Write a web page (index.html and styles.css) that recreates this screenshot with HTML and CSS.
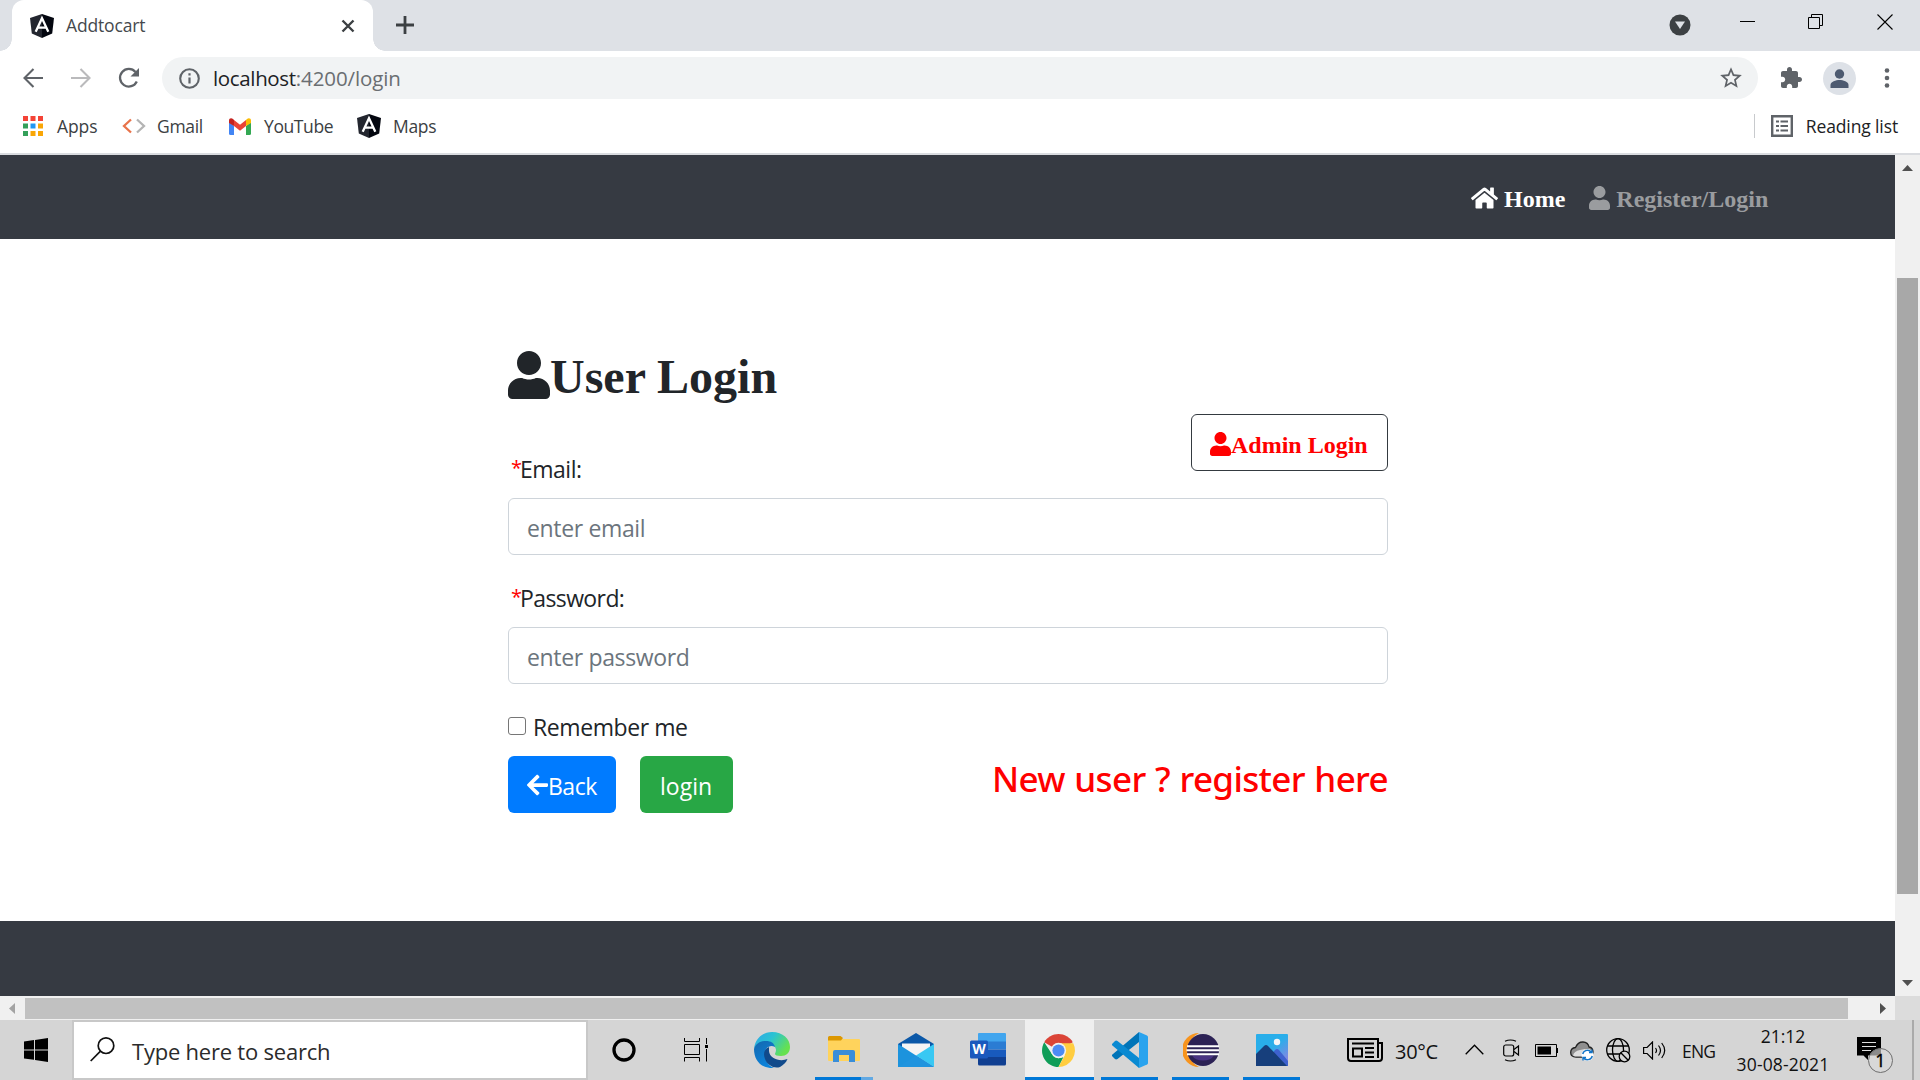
FILE: index.html
```html
<!DOCTYPE html>
<html lang="en">
<head>
<meta charset="utf-8">
<title>Addtocart</title>
<link rel="stylesheet" href="styles.css">
</head>
<body>
<svg class="defs" width="0" height="0" aria-hidden="true">
  <symbol id="user" viewBox="0 0 448 512"><path fill="currentColor" d="M224 256c70.7 0 128-57.3 128-128S294.7 0 224 0 96 57.3 96 128s57.3 128 128 128zm89.6 32h-16.7c-22.2 10.2-46.9 16-72.9 16s-50.6-5.8-72.9-16h-16.7C60.2 288 0 348.2 0 422.4V464c0 26.5 21.5 48 48 48h352c26.5 0 48-21.5 48-48v-41.6c0-74.2-60.2-134.4-134.4-134.4z"/></symbol>
  <symbol id="shield" viewBox="0 0 24 24">
    <path fill="#23262f" d="M12 0 0 4l1.8 15.6L12 24z"/><path fill="#03060f" d="M12 0l12 4-1.8 15.6L12 24z"/>
    <path fill="none" stroke="#fff" stroke-width="2.3" d="M5.7 17.8 12 4.2l6.3 13.6M8.3 13.6h7.4"/>
  </symbol>
</svg>

<header class="browser">
  <div class="tabstrip">
    <div class="tab">
      <svg class="favicon" width="24" height="24"><use href="#shield"/></svg>
      <span class="tab-title">Addtocart</span>
      <svg class="tab-close" width="14" height="14" viewBox="0 0 14 14"><path d="M1.5 1.5l11 11m0-11l-11 11" stroke="#3c4043" stroke-width="2.4"/></svg>
    </div>
    <svg class="new-tab" width="18" height="18" viewBox="0 0 18 18"><path d="M9 0v18M0 9h18" stroke="#3c4043" stroke-width="2.8"/></svg>
    <div class="window-controls">
      <svg width="22" height="22" viewBox="0 0 22 22"><circle cx="11" cy="11" r="10.5" fill="#3c4043"/><path d="M6 7.5h10L11 15z" fill="#dee1e6"/></svg>
      <svg class="minimize" width="15" height="16" viewBox="0 0 15 16"><path d="M0 8.5h15" stroke="#000"/></svg>
      <svg class="restore" width="15" height="16" viewBox="0 0 15 16"><path d="M.5 4.5h11v11H.5zM3.5 4V1.5h11v11H12" fill="none" stroke="#000"/></svg>
      <svg class="close" width="16" height="16" viewBox="0 0 16 16"><path d="M.5 .5l15 15m0-15l-15 15" stroke="#000" stroke-width="1.1"/></svg>
    </div>
  </div>

  <div class="toolbar">
    <svg width="20" height="20" viewBox="0 0 20 20"><path d="M20 10H2M10.5 1L1.5 10l9 9" fill="none" stroke="#5f6368" stroke-width="2.1"/></svg>
    <svg class="forward" width="20" height="20" viewBox="0 0 20 20"><path d="M0 10h18M9.5 1l9 9-9 9" fill="none" stroke="#bababc" stroke-width="2.1"/></svg>
    <svg class="reload" width="22" height="22" viewBox="0 0 22 22"><path d="M17.500 5A8.800 8.800 0 1 0 18.800 14.500" fill="none" stroke="#5f6368" stroke-width="2.3"/><path d="M21 1v8.500h-8.500z" fill="#5f6368"/></svg>
    <div class="omnibox">
      <svg width="21" height="21" viewBox="0 0 21 21"><circle cx="10.5" cy="10.5" r="9.3" fill="none" stroke="#5f6368" stroke-width="2.1"/><path d="M10.5 9.5v6M10.5 5.3v2.2" stroke="#5f6368" stroke-width="2.2"/></svg>
      <span class="url"><span class="host">localhost</span>:4200/login</span>
      <svg class="star" width="26" height="26" viewBox="0 0 24 24"><path fill="#5f6368" d="M22 9.24l-7.19-.62L12 2 9.19 8.63 2 9.24l5.46 4.73L5.82 21 12 17.27 18.18 21l-1.63-7.03L22 9.24zM12 15.4l-3.76 2.27 1-4.28-3.32-2.88 4.38-.38L12 6.1l1.71 4.04 4.38.38-3.32 2.88 1 4.28L12 15.4z"/></svg>
    </div>
    <svg class="extensions" width="24" height="24" viewBox="0 0 24 24"><path fill="#5f6368" d="M20.5 11H19V7c0-1.1-.9-2-2-2h-4V3.5C13 2.12 11.88 1 10.5 1S8 2.12 8 3.5V5H4c-1.1 0-1.99.9-1.99 2v3.8H3.5c1.49 0 2.7 1.21 2.7 2.7s-1.21 2.7-2.7 2.7H2V20c0 1.1.9 2 2 2h3.8v-1.5c0-1.49 1.21-2.7 2.7-2.7 1.49 0 2.7 1.21 2.7 2.7V22H17c1.1 0 2-.9 2-2v-4h1.5c1.38 0 2.5-1.12 2.5-2.5S21.88 11 20.5 11z"/></svg>
    <svg class="profile" width="33" height="33" viewBox="0 0 33 33"><circle cx="16.5" cy="16.5" r="16.5" fill="#dde1e7"/><circle cx="16.5" cy="12" r="4.7" fill="#4d5a70"/><path d="M7.5 26v-3c0-3.5 5.5-5 9-5s9 1.500 9 5v3z" fill="#4d5a70"/></svg>
    <svg class="kebab" width="6" height="20" viewBox="0 0 6 20" fill="#5f6368"><circle cx="3" cy="2.5" r="2.3"/><circle cx="3" cy="10" r="2.3"/><circle cx="3" cy="17.5" r="2.3"/></svg>
  </div>

  <nav class="bookmarks">
    <svg width="20" height="20" viewBox="0 0 20 20"><path d="M0 0h5v5H0zM7.5 0h5v5h-5zM15 0h5v5h-5z" fill="#f44336"/><path d="M0 7.5h5v5H0zM0 15h5v5H0z" fill="#34a05a"/><path d="M7.5 7.5h5v5h-5z" fill="#2196f3"/><path d="M15 7.5h5v5h-5zM7.5 15h5v5h-5zM15 15h5v5h-5z" fill="#f9a606"/></svg>
    <span class="bm-apps">Apps</span>
    <svg width="24" height="16" viewBox="0 0 24 16" fill="none" stroke-width="2.3"><path d="M9 1.500L2 8l7 6.500" stroke="#e8734a"/><path d="M15 1.500L22 8l-7 6.500" stroke="#b4b4b4"/></svg>
    <span class="bm-gmail">Gmail</span>
    <svg width="22" height="17" viewBox="0 0 22 17"><path d="M0 4l5 4v9H1.500Q0 17 0 15.500z" fill="#4285f4"/><path d="M17 8l5-4v11.500q0 1.500-1.500 1.500H17z" fill="#34a853"/><path d="M5 2l6 4.700L17 2v6l-6 4.700L5 8z" fill="#ea4335"/><path d="M0 5V2.500C0 0 2.500-.3 4 1l1 1v6z" fill="#c5221f"/><path d="M22 5V2.500C22 0 19.500-.3 18 1l-1 1v6z" fill="#fbbc04"/></svg>
    <span class="bm-youtube">YouTube</span>
    <svg width="24" height="24"><use href="#shield"/></svg>
    <span class="bm-maps">Maps</span>
    <div class="reading-list">
      <svg width="22" height="22" viewBox="0 0 22 22"><path d="M1.2 1.2h19.600v19.600H1.200z" fill="none" stroke="#5f6368" stroke-width="2.4"/><path d="M5 6.500h3M5 11h3M5 15.500h3M9.500 6.500H17M9.500 11H17M9.500 15.500H17" stroke="#5f6368" stroke-width="2"/></svg>
      <span>Reading list</span>
    </div>
  </nav>
</header>

<div class="viewport">
  <div class="page">
    <nav class="navbar">
      <a class="nav-link active"><svg width="27" height="24" viewBox="0 0 576 512"><path fill="currentColor" d="M280.37 148.26L96 300.11V464a16 16 0 0 0 16 16l112.06-.29a16 16 0 0 0 15.92-16V368a16 16 0 0 1 16-16h64a16 16 0 0 1 16 16v95.64a16 16 0 0 0 16 16.05L464 480a16 16 0 0 0 16-16V300L295.67 148.26a12.19 12.19 0 0 0-15.3 0zM571.6 251.47L488 182.56V44.05a12 12 0 0 0-12-12h-56a12 12 0 0 0-12 12v72.61L318.47 43a48 48 0 0 0-61 0L4.34 251.47a12 12 0 0 0-1.6 16.9l25.5 31A12 12 0 0 0 45.15 301l235.22-193.74a12.19 12.19 0 0 1 15.3 0L530.9 301a12 12 0 0 0 16.9-1.6l25.5-31a12 12 0 0 0-1.7-16.93z"/></svg><span>Home</span></a>
      <a class="nav-link"><svg width="21" height="24"><use href="#user"/></svg><span>Register/Login</span></a>
    </nav>
    <main class="login">
      <h1><svg width="42" height="48"><use href="#user"/></svg><span>User Login</span></h1>
      <div class="email-row">
        <label><span class="required">*</span>Email:</label>
        <button class="btn admin"><svg width="21" height="24"><use href="#user"/></svg><span>Admin Login</span></button>
      </div>
      <input class="field" type="text" placeholder="enter email">
      <label class="password-label"><span class="required">*</span>Password:</label>
      <input class="field" type="password" placeholder="enter password">
      <div class="remember"><span class="checkbox"></span><span>Remember me</span></div>
      <div class="actions">
        <button class="btn back"><svg width="21" height="24" viewBox="0 0 448 512"><path fill="currentColor" d="M257.5 445.1l-22.2 22.2c-9.4 9.4-24.6 9.4-33.9 0L7 273c-9.4-9.4-9.4-24.6 0-33.9L201.4 44.7c9.4-9.4 24.6-9.4 33.9 0l22.2 22.2c9.5 9.5 9.3 25-.4 34.3L136.6 216H424c13.3 0 24 10.7 24 24v32c0 13.3-10.7 24-24 24H136.6l120.5 114.8c9.8 9.3 10 24.8.4 34.3z"/></svg><span>Back</span></button>
        <button class="btn submit"><span>login</span></button>
        <a class="register">New user ? register here</a>
      </div>
    </main>
    <footer class="footer"></footer>
  </div>
  <div class="vscroll">
    <svg width="11" height="6" viewBox="0 0 11 6"><path d="M0 6L5.500 0 11 6z" fill="#505050"/></svg>
    <div class="vthumb"></div>
    <svg class="down" width="11" height="6" viewBox="0 0 11 6"><path d="M0 0l5.500 6L11 0z" fill="#505050"/></svg>
  </div>
  <div class="hscroll">
    <svg width="6" height="11" viewBox="0 0 6 11"><path d="M6 0L0 5.500 6 11z" fill="#a3a3a3"/></svg>
    <div class="hthumb"></div>
    <svg class="right" width="6" height="11" viewBox="0 0 6 11"><path d="M0 0l6 5.500L0 11z" fill="#505050"/></svg>
  </div>
  <div class="corner"></div>
</div>

<footer class="taskbar">
  <div class="start"><svg width="24" height="24" viewBox="0 0 24 24"><path d="M0 3.500l10-1.400v9.400H0zM11 2l13-2v11.500H11zM0 12.500h10v9.300L0 20.500zM11 12.500h13V24l-13-1.900z"/></svg></div>
  <div class="search">
    <svg width="25" height="25" viewBox="0 0 25 25" fill="none" stroke="#111" stroke-width="1.7"><circle cx="16" cy="8.700" r="7.800"/><path d="M10.500 14.200L.7 24"/></svg>
    <span>Type here to search</span>
  </div>
  <div class="apps">
    <div class="app"><svg width="24" height="24" viewBox="0 0 24 24"><circle cx="12" cy="12" r="10" fill="none" stroke="#000" stroke-width="3.300"/></svg></div>
    <div class="app"><svg width="24" height="24" viewBox="0 0 24 24"><path d="M.5 0v3.500h15V0M.5 6.500h15v10H.5zM.5 23.500V19.500h15v4M22.500 0v6M22.500 11v12.500" fill="none" stroke="#000"/><path d="M21 7h3v3h-3z"/></svg></div>
    <div class="app"><svg width="36" height="36" viewBox="0 0 36 36">
      <defs>
        <linearGradient id="edge-top" x1="0" y1="0" x2="1" y2=".5"><stop offset="0" stop-color="#2fa7e8"/><stop offset=".5" stop-color="#2bc3d2"/><stop offset="1" stop-color="#66e14f"/></linearGradient>
        <linearGradient id="edge-left" x1="0" y1="0" x2=".5" y2="1"><stop offset="0" stop-color="#1467ae"/><stop offset="1" stop-color="#0c84dc"/></linearGradient>
      </defs>
      <path d="M0 17C1 7 8 0 18 0c11 0 18 7 18 15 0 6-4 9-9 9-4 0-6-1-6-2 0-1 1-2 1-4 0-3-3-6-7-6C8 10 2 12 0 17z" fill="url(#edge-top)"/>
      <path d="M0 17c2-6 7-8 12-8 5 0 8 2 9 6-6-3-10 2-10 6 0 7 3 13 9 15C8 37 0 29 0 17z" fill="url(#edge-left)"/>
      <path d="M15 15c-5 2-6 7-4 12 2 6 9 10 15 8 3-2 6-4 7.500-8-7 3-18 0-18.500-8 0-2 0-3 0-4z" fill="#114a8b"/>
    </svg></div>
    <div class="app open stacked"><svg width="32" height="28" viewBox="0 0 32 28"><path d="M0 3h31q1 0 1 1v20q0 1-1 1H1q-1 0-1-1z" fill="#ffd35c"/><path d="M0 1.500Q0 0 1.500 0h11L15 2l-2 2.500H0z" fill="#dc9700"/><path d="M5 26V16q0-2 2-2h18q2 0 2 2v10h-6v-7H11v7z" fill="#3a8ed8"/></svg></div>
    <div class="app"><svg width="36" height="34" viewBox="0 0 36 34"><path d="M0 11L18 0l18 11v9H0z" fill="#0b58a8"/><path d="M4 10.500h28V18L18 28 4 18z" fill="#f4f4f4"/><path d="M0 11l36 23H0z" fill="#1c93dd"/><path d="M36 11L18 22.500 36 34z" fill="#39c8f3"/><path d="M18 22.500L36 34H0z" fill="#2094de"/></svg></div>
    <div class="app"><svg width="36" height="34" viewBox="0 0 36 34"><path d="M8 1q0-1 1-1h26q1 0 1 1v8H8z" fill="#41a5ee"/><path d="M8 8.500h28v8H8z" fill="#2b7cd3"/><path d="M8 16.500h28v7.500H8z" fill="#185abd"/><path d="M8 24h28v7q0 1.500-1.500 1.500h-25Q8 32.500 8 31z" fill="#103f91"/><rect y="7.500" width="18" height="18" rx="1.500" fill="#1b59bd"/><text x="9" y="21" text-anchor="middle" class="word-mark">W</text></svg></div>
    <div class="app open current"><svg width="33" height="33" viewBox="0 0 34 34"><path d="M17 17L2.300 8.500A17 17 0 0 1 31.700 8.500z" fill="#db4437"/><path d="M17 34A17 17 0 0 1 2.300 8.500L10.200 20.500 17 25l5-1z" fill="#0f9d58"/><path d="M17 9.500h15.200A17 17 0 0 1 17 34l6.500-12z" fill="#ffcd40"/><circle cx="17" cy="17" r="7.900" fill="#f1f1f1"/><circle cx="17" cy="17" r="6.300" fill="#4c8bf5"/></svg></div>
    <div class="app open"><svg width="36" height="36" viewBox="0 0 36 36"><path d="M0 24l3 3q1 .8 2.500 0L27 10V0L1 22q-1.500 1-1 2z" fill="#0074b8"/><path d="M0 12l3-3q1-.8 2.500 0L27 26v10L1 14q-1.500-1-1-2z" fill="#0a8ad2"/><path d="M27 0l8 3.500q1 .5 1 1.500v26q0 1-1 1.500L27 36z" fill="#2aa3ee"/></svg></div>
    <div class="app open"><svg width="36" height="34" viewBox="0 0 36 34"><path d="M16 0A17 17 0 0 0 16 34 19 19 0 0 1 16 0z" fill="#f7941e"/><circle cx="20" cy="17" r="16" fill="#2c2255"/><path d="M9 22.500h22q-3 5-11 5t-11-5z" fill="#483382"/><path d="M4 13.200h32M3.500 17.200h32.500M4 21.200h32" stroke="#fff" stroke-width="2"/></svg></div>
    <div class="app open"><svg width="32" height="32" viewBox="0 0 32 32"><defs><linearGradient id="sky" x1=".2" y1="0" x2="1" y2="1"><stop offset=".4" stop-color="#29aeea"/><stop offset="1" stop-color="#a07be0"/></linearGradient></defs><rect width="32" height="32" rx="1" fill="url(#sky)"/><path d="M12 25l7-9q2-2 4 0l9 11v5H15z" fill="#3e62cf"/><path d="M0 20l8-8q2-2 4 0l19 20H0z" fill="#173f7c"/><circle cx="21" cy="8" r="3.200" fill="#f4f6f8"/></svg></div>
  </div>
  <div class="tray">
    <svg width="36" height="24" viewBox="0 0 36 24" fill="none" stroke="#000" stroke-width="2"><path d="M31 20V1H1v19q0 3 3 3h28q3 0 3-3V5h-4"/><path d="M5 5.500h22M18 10h9M18 14.500h9M18 19h9M6 10.500h9V18.500H6z"/></svg>
    <span class="weather">30°C</span>
    <svg class="chevron" width="19" height="11" viewBox="0 0 19 11"><path d="M.7 10.200L9.500 1.200l8.800 9" fill="none" stroke="#000" stroke-width="1.300"/></svg>
    <svg class="meet" width="17" height="23" viewBox="0 0 17 23" fill="none" stroke="#000" stroke-width="1.200"><rect x=".7" y="6" width="10" height="11" rx="2"/><path d="M11 10.500l4.500-3.500v9L11 12.500M2 2.300Q7.500-.3 13 2.300M2 20.700q5.500 2.600 11 0"/></svg>
    <svg class="battery" width="23" height="13" viewBox="0 0 23 13"><path d="M.5 .5h21v12H.5zM22.500 4v5" fill="none" stroke="#000"/><path d="M2.500 2.500H16v8H2.500z"/></svg>
    <svg class="cloud" width="24" height="20" viewBox="0 0 24 20"><path d="M6 16Q.7 16 .7 11.500T5.500 6.500Q8 .8 13 1t6 5q4 .5 4 5t-5 5z" fill="#8f8f8f" stroke="#222" stroke-width="1.300"/><path d="M3 14.500Q4 10 10 9l5-1v7.500H5z" fill="#dedede"/><circle cx="17.500" cy="14" r="6" fill="#fff"/><path d="M12.700 13a5 5 0 0 1 9-1.500M22.300 15a5 5 0 0 1-9 1.500M22 8.500v3h-3M13 19.500v-3h3" fill="none" stroke="#1174c8" stroke-width="1.400"/></svg>
    <svg class="globe" width="25" height="25" viewBox="0 0 25 25" fill="none" stroke="#000" stroke-width="1.300"><circle cx="12" cy="12" r="11.300"/><ellipse cx="12" cy="12" rx="5.500" ry="11.300"/><path d="M1.500 8h21M1.500 16h13"/><circle cx="18.500" cy="18.500" r="5.300" fill="#d6d6d6"/><path d="M14.800 14.800l7.400 7.400"/></svg>
    <svg class="speaker" width="23" height="19" viewBox="0 0 23 19" fill="none" stroke="#000" stroke-width="1.200"><path d="M.6 6.500h3.500L9.500 1v17L4.100 12.500H.6z"/><path d="M12.500 7q2 2.500 0 5M15.500 4.500q4 5 0 10M18.700 2q6 7.500 0 15"/></svg>
    <span class="lang">ENG</span>
    <div class="clock"><span>21:12</span><span class="date">30-08-2021</span></div>
    <svg class="notifications" width="37" height="38" viewBox="0 0 37 38"><path d="M0 2h24v18.500H11v4.500L6.500 20.500H0z"/><path d="M5 7.500h14M5 11.500h14M5 15.500h9" stroke="#ddd" stroke-width="1.200"/><circle cx="23.500" cy="25.500" r="12" fill="#d8d8d8"/><path d="M12 22q2-8 11.500-8.500H24V20.500H13z" fill="#8b8b8b"/><circle cx="23.500" cy="25.500" r="12" fill="none" stroke="#6e6e6e"/><text x="23.500" y="32" text-anchor="middle" class="badge">1</text></svg>
    <div class="show-desktop"></div>
  </div>
</footer>
</body>
</html>
```
FILE: styles.css
```css
* { box-sizing: border-box; }
body { margin: 0; width: 1920px; height: 1080px; overflow: hidden; background: #fff; font-family: "Open Sans", "Noto Sans", sans-serif; color: #212529; display: flex; flex-direction: column; }
svg { display: block; flex: none; }
.defs { display: none; }
span, a { white-space: nowrap; }

.browser { height: 155px; border-bottom: 2px solid #dadce0; flex: none; }
.tabstrip { height: 51px; background: #dee1e6; display: flex; align-items: flex-start; padding-left: 12px; }
.tab { width: 361px; height: 51px; background: #fff; border-radius: 12px 12px 0 0; display: flex; align-items: center; padding: 0 18px; position: relative; }
.tab::before, .tab::after { content: ""; position: absolute; bottom: 0; width: 12px; height: 12px; }
.tab::before { left: -12px; background: radial-gradient(circle at 0 0, transparent 11.5px, #fff 12px); }
.tab::after { right: -12px; background: radial-gradient(circle at 100% 0, transparent 11.5px, #fff 12px); }
.tab-title { font-size: 17.5px; margin: -2px 0 0 12px; letter-spacing: -.15px; color: #45494d; }
.tab-close { margin-left: auto; }
.new-tab { margin: 16px 0 0 23px; }
.window-controls { display: flex; align-items: flex-start; margin: 14px 27px 0 auto; }
.window-controls .minimize { margin: -1px 0 0 49px; }
.window-controls .restore { margin: -1px 0 0 53px; }
.window-controls .close { margin-left: 54px; }

.toolbar { height: 54px; display: flex; align-items: center; padding: 0 30px 0 23px; }
.forward { margin-left: 28px; }
.reload { margin-left: 27px; }
.omnibox { margin-left: 22px; width: 1596px; height: 42px; border-radius: 21px; background: #f1f3f4; display: flex; align-items: center; padding: 0 14px 0 17px; }
.url { font-size: 20.5px; letter-spacing: -.1px; margin-left: 13px; color: #6a6e72; }
.host { color: #202124; letter-spacing: -.35px; }
.star { margin-left: auto; }
.extensions { margin-left: 21px; }
.profile { margin-left: 20px; }
.kebab { margin-left: auto; }

.bookmarks { height: 48px; padding: 0 22px 0 23px; display: flex; align-items: center; font-size: 17.5px; color: #3c4043; margin-top: -3px; }
.bookmarks span { padding-bottom: 1px; }
.bm-apps { margin: 0 23px 0 14px; width: 42px; letter-spacing: -.1px; }
.bm-gmail { margin: 0 25px 0 11px; width: 47px; letter-spacing: -.3px; }
.bm-youtube { margin: 0 23px 0 13px; width: 70px; letter-spacing: -.4px; }
.bm-maps { margin-left: 12px; letter-spacing: -.3px; }
.reading-list { margin-left: auto; height: 24px; border-left: 1px solid #c8cacd; padding-left: 16px; display: flex; align-items: center; gap: 13px; letter-spacing: -.12px; color: #202124; }

.viewport { height: 865px; flex: none; display: grid; grid-template: 841px 24px / 1895px 25px; }
.page { display: flex; flex-direction: column; }
.navbar { height: 84px; background: #363a42; display: flex; gap: 24px; padding: 31px 0 0 1471px; align-items: flex-start; font: bold 24px/27px "Liberation Serif", serif; }
.nav-link { display: flex; gap: 6px; color: #9a9c9f; }
.nav-link.active { color: #fff; }
.login { flex: 1; width: 880px; margin-left: 508px; padding-top: 107px; }
h1 { margin: 0; height: 68px; display: flex; font: bold 48px/58px "Liberation Serif", serif; }
h1 svg { margin-top: 5px; }
h1 span { margin-top: 2px; }
.email-row { display: flex; align-items: flex-end; justify-content: space-between; height: 72px; margin: 0 0 12px; }
label { display: flex; height: 36px; font-size: 23px; line-height: 38px; padding-left: 3px; letter-spacing: -.5px; }
.required { width: 9px; color: #ff0000; font-size: 20px; line-height: 36px; letter-spacing: 0; }
.btn { height: 57px; border: 1px solid transparent; border-radius: 6px; font: 23px/36px "Open Sans", sans-serif; color: #fff; padding: 2px 0 0 18px; display: flex; align-items: center; }
.admin { width: 197px; align-self: flex-start; padding-top: 4px; background: #fff; border-color: #343a40; color: #ff0000; font: bold 24px/36px "Liberation Serif", serif; }
.admin svg { margin-top: -2px; }
.field { display: block; width: 880px; height: 57px; border: 1px solid #ced4da; border-radius: 6px; padding: 3px 18px 0; background: #fff; font: 23px "Open Sans", sans-serif; letter-spacing: -.35px; }
.field::placeholder { color: #6c757d; opacity: 1; }
.password-label { margin: 24px 0 12px; letter-spacing: -.6px; }
.remember { height: 36px; margin: 24px 0 12px; display: flex; gap: 7px; font-size: 23px; line-height: 38px; letter-spacing: -.42px; }
.checkbox { width: 18px; height: 18px; margin-top: 9px; border: 1.5px solid #767676; border-radius: 3px; }
.actions { display: flex; align-items: flex-start; }
.back { width: 108px; background: #007bff; letter-spacing: -.5px; }
.back svg { margin-top: -2px; }
.submit { width: 93px; margin-left: 24px; padding-left: 19px; background: #28a745; }
.register { margin-left: auto; color: #ff0000; font: 500 35px/46px "Noto Sans", sans-serif; letter-spacing: -.65px; word-spacing: 1px; }
.footer { height: 75px; background: #363a42; }

.vscroll { background: #f0f0f0; display: flex; flex-direction: column; align-items: center; padding: 10px 0; }
.vthumb { width: 21px; height: 616px; margin-top: 107px; background: #a8a8a8; }
.down { margin-top: auto; }
.hscroll { background: #f0f0f0; display: flex; align-items: center; padding: 0 9px; }
.hthumb { width: 1823px; height: 21px; margin-left: 10px; background: #c1c1c1; }
.right { margin-left: auto; }
.corner { background: #dcdcdc; }

.taskbar { height: 60px; background: #d5d5d5; display: flex; color: #111; }
.start { width: 72px; display: flex; align-items: center; justify-content: center; }
.search { width: 516px; height: 60px; background: #fff; border: 2px solid #c8c8c8; display: flex; align-items: center; padding-left: 16px; font-size: 22px; letter-spacing: -.22px; color: #2b2b2b; }
.search span { margin: 2px 0 0 17px; }
.search svg { margin-top: -1px; }
.apps { display: flex; }
.app { width: 72px; height: 60px; display: flex; align-items: center; justify-content: center; }
.app:nth-child(3) { margin-left: 4px; }
.app.open { width: 71px; background: linear-gradient(#0078d7, #0078d7) 50% 100% / 57px 3px no-repeat; }
.app.stacked { width: 72px; background: linear-gradient(90deg, #0078d7 46px, #62a9e3 46px) 50% 100% / 58px 3px no-repeat; }
.app.current { width: 69px; margin: 0 0 0 1px; padding-right: 2px; background: linear-gradient(#0078d7, #0078d7) 0 100% / 100% 3px no-repeat #efefef; }
.word-mark { font: bold 14px "Open Sans", sans-serif; fill: #fff; }
.tray { flex: 1; display: flex; align-items: center; padding-left: 40px; }
.weather { font-size: 20px; letter-spacing: -.3px; margin: 3px 0 0 12px; width: 44px; }
.chevron { margin-left: 26px; margin-top: -2px; }
.meet { margin-left: 19px; }
.battery { margin-left: 15px; margin-top: 1px; }
.cloud { margin-left: 12px; margin-top: 2px; }
.globe { margin-left: 12px; }
.speaker { margin-left: 12px; }
.lang { font-size: 17.5px; letter-spacing: -.8px; margin: 1px 0 0 16px; width: 36px; }
.clock { width: 94px; margin-left: 18px; display: flex; flex-direction: column; align-items: center; font-size: 17.5px; line-height: 28px; }
.clock .date { letter-spacing: .15px; }
.notifications { margin-left: 27px; margin-top: 8px; }
.badge { font: 18px "Open Sans", sans-serif; fill: #000; stroke: #000; stroke-width: .4px; }
.show-desktop { width: 2px; height: 60px; background: #aaa; margin-left: auto; margin-right: 6px; }
```
